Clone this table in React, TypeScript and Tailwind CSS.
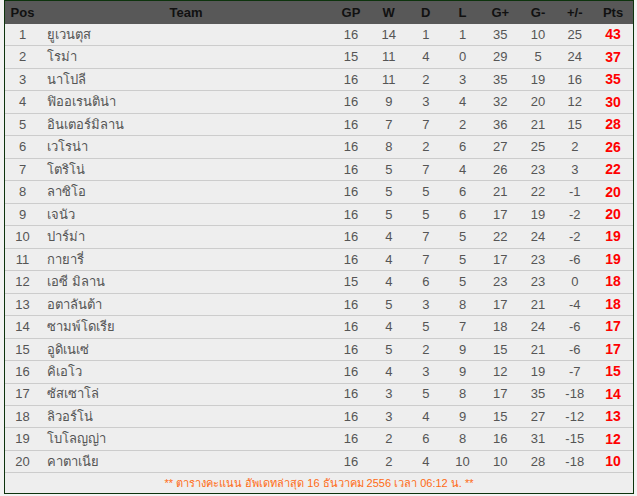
import React from "react";

const rows: [number, string, number, number, number, number, number, number, number, number][] = [
  [1, "ยูเวนตุส", 16, 14, 1, 1, 35, 10, 25, 43],
  [2, "โรม่า", 15, 11, 4, 0, 29, 5, 24, 37],
  [3, "นาโปลี", 16, 11, 2, 3, 35, 19, 16, 35],
  [4, "ฟิออเรนติน่า", 16, 9, 3, 4, 32, 20, 12, 30],
  [5, "อินเตอร์มิลาน", 16, 7, 7, 2, 36, 21, 15, 28],
  [6, "เวโรน่า", 16, 8, 2, 6, 27, 25, 2, 26],
  [7, "โตริโน่", 16, 5, 7, 4, 26, 23, 3, 22],
  [8, "ลาซิโอ", 16, 5, 5, 6, 21, 22, -1, 20],
  [9, "เจนัว", 16, 5, 5, 6, 17, 19, -2, 20],
  [10, "ปาร์ม่า", 16, 4, 7, 5, 22, 24, -2, 19],
  [11, "กายารี่", 16, 4, 7, 5, 17, 23, -6, 19],
  [12, "เอซี มิลาน", 15, 4, 6, 5, 23, 23, 0, 18],
  [13, "อตาลันต้า", 16, 5, 3, 8, 17, 21, -4, 18],
  [14, "ซามพ์โดเรีย", 16, 4, 5, 7, 18, 24, -6, 17],
  [15, "อูดิเนเซ่", 16, 5, 2, 9, 15, 21, -6, 17],
  [16, "คิเอโว", 16, 4, 3, 9, 12, 19, -7, 15],
  [17, "ซัสเซาโล่", 16, 3, 5, 8, 17, 35, -18, 14],
  [18, "ลิวอร์โน่", 16, 3, 4, 9, 15, 27, -12, 13],
  [19, "โบโลญญ่า", 16, 2, 6, 8, 16, 31, -15, 12],
  [20, "คาตาเนีย", 16, 2, 4, 10, 10, 28, -18, 10],
];

const cols = "grid grid-cols-[35px_292px_38px_37.5px_36.5px_37px_38.5px_37px_36.5px_40px]";

export default function App() {
  return (
    <div
      className="w-[637px] h-[496px] bg-[#f3f3f3] pl-[4px] pr-[3px]"
      style={{ fontFamily: '"Liberation Sans", Arial, "Noto Sans", sans-serif' }}
    >
      <div className="w-[630px] h-[494px] border border-[#0d330d] bg-[#eeeeee] flex flex-col">
        <div className={`${cols} h-[23px] bg-[#585858] text-[13px] font-bold text-[#111111] items-center`}>
          <div className="text-center">Pos</div>
          <div className="text-center">Team</div>
          <div className="text-center">GP</div>
          <div className="text-center">W</div>
          <div className="text-center">D</div>
          <div className="text-center">L</div>
          <div className="text-center">G+</div>
          <div className="text-center">G-</div>
          <div className="text-center">+/-</div>
          <div className="text-center">Pts</div>
        </div>
        {rows.map((r) => (
          <div
            key={r[0]}
            className={`${cols} h-[22.47px] border-b border-[#cccccc] text-[13px] text-[#555555] items-center`}
          >
            <div className="text-center">{r[0]}</div>
            <div className="pl-[7px]">{r[1]}</div>
            <div className="text-center">{r[2]}</div>
            <div className="text-center">{r[3]}</div>
            <div className="text-center">{r[4]}</div>
            <div className="text-center">{r[5]}</div>
            <div className="text-center">{r[6]}</div>
            <div className="text-center">{r[7]}</div>
            <div className="text-center">{r[8]}</div>
            <div className="text-center font-bold text-[14px] text-[#ff0000]">{r[9]}</div>
          </div>
        ))}
        <div className="flex-1 flex items-center justify-center text-[11px] text-[#ff6a13]">
          ** ตารางคะแนน อัพเดทล่าสุด 16 ธันวาคม 2556 เวลา 06:12 น. **
        </div>
      </div>
    </div>
  );
}
